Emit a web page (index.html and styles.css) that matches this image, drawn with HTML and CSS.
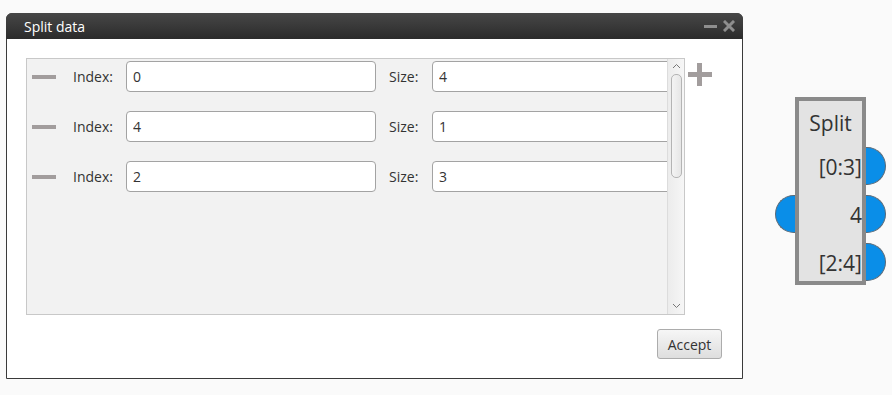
FILE: index.html
```html
<!DOCTYPE html>
<html lang="en">
<head>
    <meta charset="UTF-8">
    <title>Split data</title>
    <link rel="stylesheet" href="styles.css">
</head>
<body>
    <div class="canvas">
        <div class="window">
            <div class="title-bar">
                <span class="title">Split data</span>
                <div class="title-buttons">
                    <span class="btn-min"></span>
                    <svg class="btn-close" width="12" height="12" viewBox="0 0 12 12">
                        <path d="M2 2 L10 10 M10 2 L2 10" stroke="#8e8e8e" stroke-width="3" stroke-linecap="square"/>
                    </svg>
                </div>
            </div>
            <div class="window-body">
                <div class="list-row">
                    <div class="list">
                        <div class="list-content">
                            <div class="row">
                                <span class="remove"></span>
                                <label class="lbl">Index:</label>
                                <input class="field index" type="text" value="0">
                                <label class="lbl size-lbl">Size:</label>
                                <input class="field size" type="text" value="4">
                            </div>
                            <div class="row">
                                <span class="remove"></span>
                                <label class="lbl">Index:</label>
                                <input class="field index" type="text" value="4">
                                <label class="lbl size-lbl">Size:</label>
                                <input class="field size" type="text" value="1">
                            </div>
                            <div class="row">
                                <span class="remove"></span>
                                <label class="lbl">Index:</label>
                                <input class="field index" type="text" value="2">
                                <label class="lbl size-lbl">Size:</label>
                                <input class="field size" type="text" value="3">
                            </div>
                        </div>
                        <div class="scrollbar">
                            <svg class="arrow" width="9" height="6" viewBox="0 0 9 6">
                                <path d="M1 5 L4.5 1.5 L8 5" fill="none" stroke="#777" stroke-width="1"/>
                            </svg>
                            <div class="thumb"></div>
                            <svg class="arrow arrow-down" width="9" height="6" viewBox="0 0 9 6">
                                <path d="M1 1 L4.5 4.5 L8 1" fill="none" stroke="#777" stroke-width="1"/>
                            </svg>
                        </div>
                    </div>
                    <div class="add">
                        <span class="add-h"></span>
                        <span class="add-v"></span>
                    </div>
                </div>
                <div class="footer">
                    <button class="accept">Accept</button>
                </div>
            </div>
        </div>

        <div class="node">
            <div class="node-line node-title">Split</div>
            <div class="node-line">[0:3]</div>
            <div class="node-line">4</div>
            <div class="node-line">[2:4]</div>
            <span class="port port-out out-1"></span>
            <span class="port port-out out-2"></span>
            <span class="port port-out out-3"></span>
            <span class="port port-in"></span>
        </div>
    </div>
</body>
</html>
```

FILE: styles.css
```css
body {
    margin: 0;
    background-color: #fafafa;
    font-family: "Open Sans", "Noto Sans", sans-serif;
    color: #333;
}

.canvas {
    position: relative;
    width: 892px;
    height: 395px;
    padding: 13px 0 0 6px;
    box-sizing: border-box;
}

/* dialog window */
.window {
    width: 737px;
    height: 366px;
    box-sizing: border-box;
    border: 1px solid #3a3a3a;
    border-radius: 6px 6px 0 0;
    background: white;
    display: flex;
    flex-direction: column;
}

.title-bar {
    height: 26px;
    margin: -1px -1px 0 -1px;
    border-radius: 6px 6px 0 0;
    background: linear-gradient(#474747, #2b2b2b);
    display: flex;
    align-items: center;
    justify-content: space-between;
    padding: 0 8px 0 18px;
}

.title {
    color: white;
    font-size: 14px;
}

.title-buttons {
    display: flex;
    align-items: center;
    gap: 6px;
}

.btn-min {
    display: block;
    width: 13px;
    height: 3px;
    background: #8e8e8e;
    margin-top: 1px;
}

.window-body {
    flex: 1;
    padding: 19px 20px 19px 19px;
    display: flex;
    flex-direction: column;
}

.list-row {
    display: flex;
    align-items: flex-start;
}

.list {
    width: 659px;
    height: 257px;
    box-sizing: border-box;
    border: 1px solid #c8c8c8;
    background: #f2f2f2;
    display: flex;
}

.list-content {
    flex: 1;
    overflow: hidden;
    padding-top: 2px;
    display: flex;
    flex-direction: column;
    gap: 19px;
}

.row {
    display: flex;
    align-items: center;
    height: 31px;
    padding-left: 5px;
    white-space: nowrap;
}

.remove {
    display: block;
    width: 24px;
    height: 4px;
    background: #a29d9d;
    flex-shrink: 0;
}

.lbl {
    font-size: 14px;
    margin-left: 17px;
    width: 53px;
    flex-shrink: 0;
}

.size-lbl {
    margin-left: 13px;
    width: 43px;
}

.field {
    height: 31px;
    box-sizing: border-box;
    border: 1px solid #a3a3a3;
    border-radius: 4px;
    background: white;
    font-family: "Open Sans", "Noto Sans", sans-serif;
    font-size: 14px;
    color: #333;
    padding: 0 6px;
    flex-shrink: 0;
}

.index {
    width: 250px;
}

.size {
    width: 250px;
}

.scrollbar {
    width: 17px;
    flex-shrink: 0;
    background: linear-gradient(90deg, #ececec, #f6f6f6);
    border-left: 1px solid #dcdcdc;
    display: flex;
    flex-direction: column;
    align-items: center;
    padding: 4px 0 5px;
    box-sizing: border-box;
}

.arrow {
    display: block;
}

.thumb {
    width: 11px;
    height: 104px;
    margin-top: 5px;
    box-sizing: border-box;
    border: 1px solid #b4b4b4;
    border-radius: 5px;
    background: linear-gradient(90deg, #f4f4f4, #e6e6e6);
}

.arrow-down {
    margin-top: auto;
}

.add {
    position: relative;
    width: 24px;
    height: 23px;
    margin: 5px 0 0 3px;
}

.add-h,
.add-v {
    position: absolute;
    background: #a29d9d;
}

.add-h {
    left: 0;
    top: 9px;
    width: 24px;
    height: 5px;
}

.add-v {
    left: 9px;
    top: 0;
    width: 5px;
    height: 23px;
}

.footer {
    display: flex;
    justify-content: flex-end;
    margin-top: auto;
}

.accept {
    width: 65px;
    height: 30px;
    border: 1px solid #acacac;
    border-radius: 3px;
    background: linear-gradient(#f6f6f6, #dedede);
    font-family: "Open Sans", "Noto Sans", sans-serif;
    font-size: 14px;
    color: #333;
    padding: 0;
}

/* graph node */
.node {
    position: absolute;
    left: 795px;
    top: 97px;
    width: 71px;
    height: 188px;
    box-sizing: border-box;
    border: 4px solid #8a8a8a;
    background: #e3e3e3;
    padding: 8px 0 0 0;
    text-align: right;
}

.node-line {
    font-size: 21px;
    line-height: 48px;
    height: 48px;
    color: #333;
}

.node-title {
    text-align: center;
    line-height: 28px;
    height: 34px;
}

.port {
    position: absolute;
    width: 20px;
    height: 38px;
    box-sizing: border-box;
    background: #0a8ee8;
    border: 1px solid #5a6a78;
}

.port-out {
    left: 67px;
    border-left: none;
    border-radius: 0 19px 19px 0;
}

.out-1 { top: 46px; }
.out-2 { top: 94px; }
.out-3 { top: 142px; }

.port-in {
    left: -24px;
    top: 94px;
    border-right: none;
    border-radius: 19px 0 0 19px;
}
```
